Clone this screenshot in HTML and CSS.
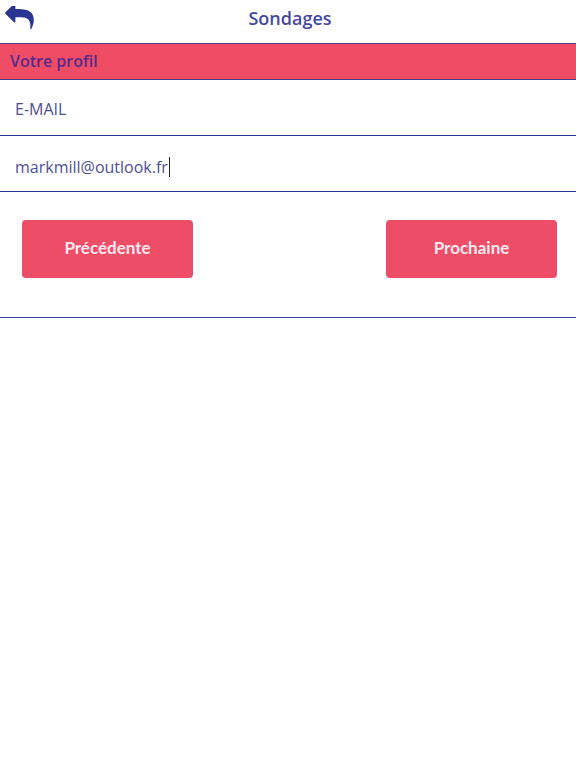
FILE: index.html
```html
<!DOCTYPE html>
<html lang="fr">
<head>
<meta charset="utf-8">
<title>Sondages</title>
<link rel="stylesheet" href="styles.css">
</head>
<body>
<header class="topbar">
  <button class="back" aria-label="Retour">
    <svg viewBox="0 0 1792 1500" width="31" height="24"><path fill="#2a3592" d="M1792 1120q0 166-127 451-3 7-10.5 24t-13.5 30-13 22q-12 17-28 17-15 0-23.5-10t-8.5-25q0-9 2.5-26.5t2.5-23.5q5-68 5-123 0-101-17.5-181t-48.5-138.5-80-101-105.5-69.5-133-42.5-154-21.5-175.5-6h-224v256q0 26-19 45t-45 19-45-19l-512-512q-19-19-19-45t19-45l512-512q19-19 45-19t45 19 19 45v256h224q713 0 875 403 53 134 53 333z" transform="translate(0,-200)"/></svg>
  </button>
  <h1 class="title">Sondages</h1>
</header>
<div class="section">Votre profil</div>
<div class="row label">E-MAIL</div>
<div class="row value">markmill@outlook.fr<span class="caret"></span></div>
<div class="actions">
  <button class="btn">Précédente</button>
  <button class="btn">Prochaine</button>
</div>
</body>
</html>
```
FILE: styles.css
```css
html, body {
  margin: 0;
  padding: 0;
  background: #ffffff;
  font-family: "Open Sans", "Noto Sans", sans-serif;
}
.topbar {
  height: 43px;
  display: flex;
  align-items: center;
  justify-content: center;
  position: relative;
}
.back {
  position: absolute;
  left: 4px;
  top: 6px;
  padding: 0;
  border: 0;
  background: none;
  line-height: 0;
}
.title {
  margin: 0 0 7px 4px;
  font-size: 18px;
  font-weight: 600;
  color: #444a9e;
}
.section {
  height: 35px;
  border-top: 1px solid #4b3b8a;
  border-bottom: 1px solid #4b3b8a;
  background: #ef4d66;
  color: #5a2a8a;
  font-weight: 600;
  font-size: 16px;
  line-height: 35px;
  padding-left: 10px;
}
.row {
  border-bottom: 1px solid #2b3a96;
  padding-left: 15px;
  display: flex;
  align-items: center;
  font-size: 16px;
  color: #4c4f97;
}
.label {
  padding-top: 3px;
  height: 52px;
}
.value {
  padding-top: 6px;
  height: 49px;
}
.caret {
  display: inline-block;
  width: 1px;
  height: 20px;
  background: #222;
  margin-left: 1px;
}
.actions {
  display: flex;
  justify-content: space-between;
  padding: 28px 19px 39px 22px;
  border-bottom: 1px solid #3346a8;
}
.btn {
  width: 171px;
  height: 58px;
  padding: 0 0 3px;
  border: 0;
  border-radius: 4px;
  background: #ee4d68;
  color: #fde8ee;
  font-family: "Lato", sans-serif;
  font-weight: 700;
  font-size: 17px;
}
```
